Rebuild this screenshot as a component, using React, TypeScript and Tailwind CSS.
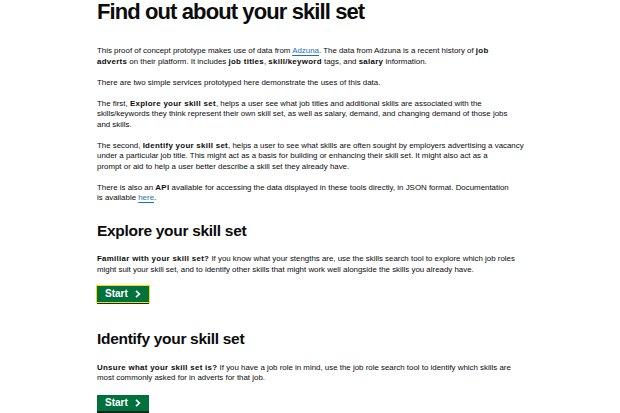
import React from "react";

const Chevron = () => (
  <svg width="6" height="8" viewBox="0 0 6 8" className="ml-[7px]" aria-hidden="true">
    <path d="M1 0.8 L4.4 4 L1 7.2" fill="none" stroke="white" strokeWidth="1.7" />
  </svg>
);

const StartButton = ({ focused }: { focused?: boolean }) => (
  <div
    className={
      "flex items-center h-[16px] w-[52px] pl-[8px] bg-[#00703c] text-white font-bold text-[10px] leading-[16px] shadow-[0_2px_0_#002d18] " +
      (focused ? "outline outline-1 outline-[#ffdd00]" : "")
    }
  >
    Start
    <Chevron />
  </div>
);

const Link = ({ children }: { children: React.ReactNode }) => (
  <a className="text-[#1d70b8] underline decoration-[0.5px] underline-offset-[1.5px]">{children}</a>
);

const B = ({ children }: { children: React.ReactNode }) => (
  <b className="font-bold tracking-[0.3px]">{children}</b>
);

export default function App() {
  return (
    <div
      className="w-[620px] h-[413px] overflow-hidden bg-white text-[#0b0c0c] pl-[97px]"
      style={{ fontFamily: '"Liberation Sans", Arial, sans-serif' }}
    >
      <div className="w-[450px]">
        <h1 className="text-[22px] font-bold leading-[22px] tracking-[-0.9px] pt-[1px] mb-[23px]">
          Find out about your skill set
        </h1>
        <div className="text-[7.9px] leading-[10.5px]">
          <p className="mb-[10.5px]">
            This proof of concept prototype makes use of data from <Link>Adzuna</Link>. The data from Adzuna is a
            recent history of <B>job</B>
            <br />
            <B>adverts</B> on their platform. It includes <B>job titles</B>, <B>skill/keyword</B> tags, and{" "}
            <B>salary</B> information.
          </p>
          <p className="mb-[10.5px]">
            There are two simple services prototyped here demonstrate the uses of this data.
          </p>
          <p className="mb-[10.5px]">
            The first, <B>Explore your skill set</B>, helps a user see what job titles and additional skills are
            associated with the
            <br />
            skills/keywords they think represent their own skill set, as well as salary, demand, and changing demand
            of those jobs
            <br />
            and skills.
          </p>
          <p className="mb-[10.5px]">
            The second, <B>Identify your skill set</B>, helps a user to see what skills are often sought by employers
            advertising a vacancy
            <br />
            under a particular job title. This might act as a basis for building or enhancing their skill set. It
            might also act as a
            <br />
            prompt or aid to help a user better describe a skill set they already have.
          </p>
          <p>
            There is also an <B>API</B> available for accessing the data displayed in these tools directly, in JSON
            format. Documentation
            <br />
            is available <Link>here</Link>.
          </p>
        </div>
        <h2 className="text-[15.5px] font-bold leading-[18px] tracking-[-0.3px] mt-[18px] mb-[14.7px]">
          Explore your skill set
        </h2>
        <p className="text-[7.9px] leading-[10.5px] mb-[10.7px]">
          <B>Familiar with your skill set?</B> If you know what your stengths are, use the skills search tool to
          explore which job roles
          <br />
          might suit your skill set, and to identify other skills that might work well alongside the skills you
          already have.
        </p>
        <StartButton focused />
        <h2 className="text-[15.5px] font-bold leading-[18px] tracking-[-0.3px] mt-[28.4px] mb-[14.7px]">
          Identify your skill set
        </h2>
        <p className="text-[7.9px] leading-[10.5px] mb-[10.7px]">
          <B>Unsure what your skill set is?</B> If you have a job role in mind, use the job role search tool to
          identify which skills are
          <br />
          most commonly asked for in adverts for that job.
        </p>
        <StartButton />
      </div>
    </div>
  );
}
